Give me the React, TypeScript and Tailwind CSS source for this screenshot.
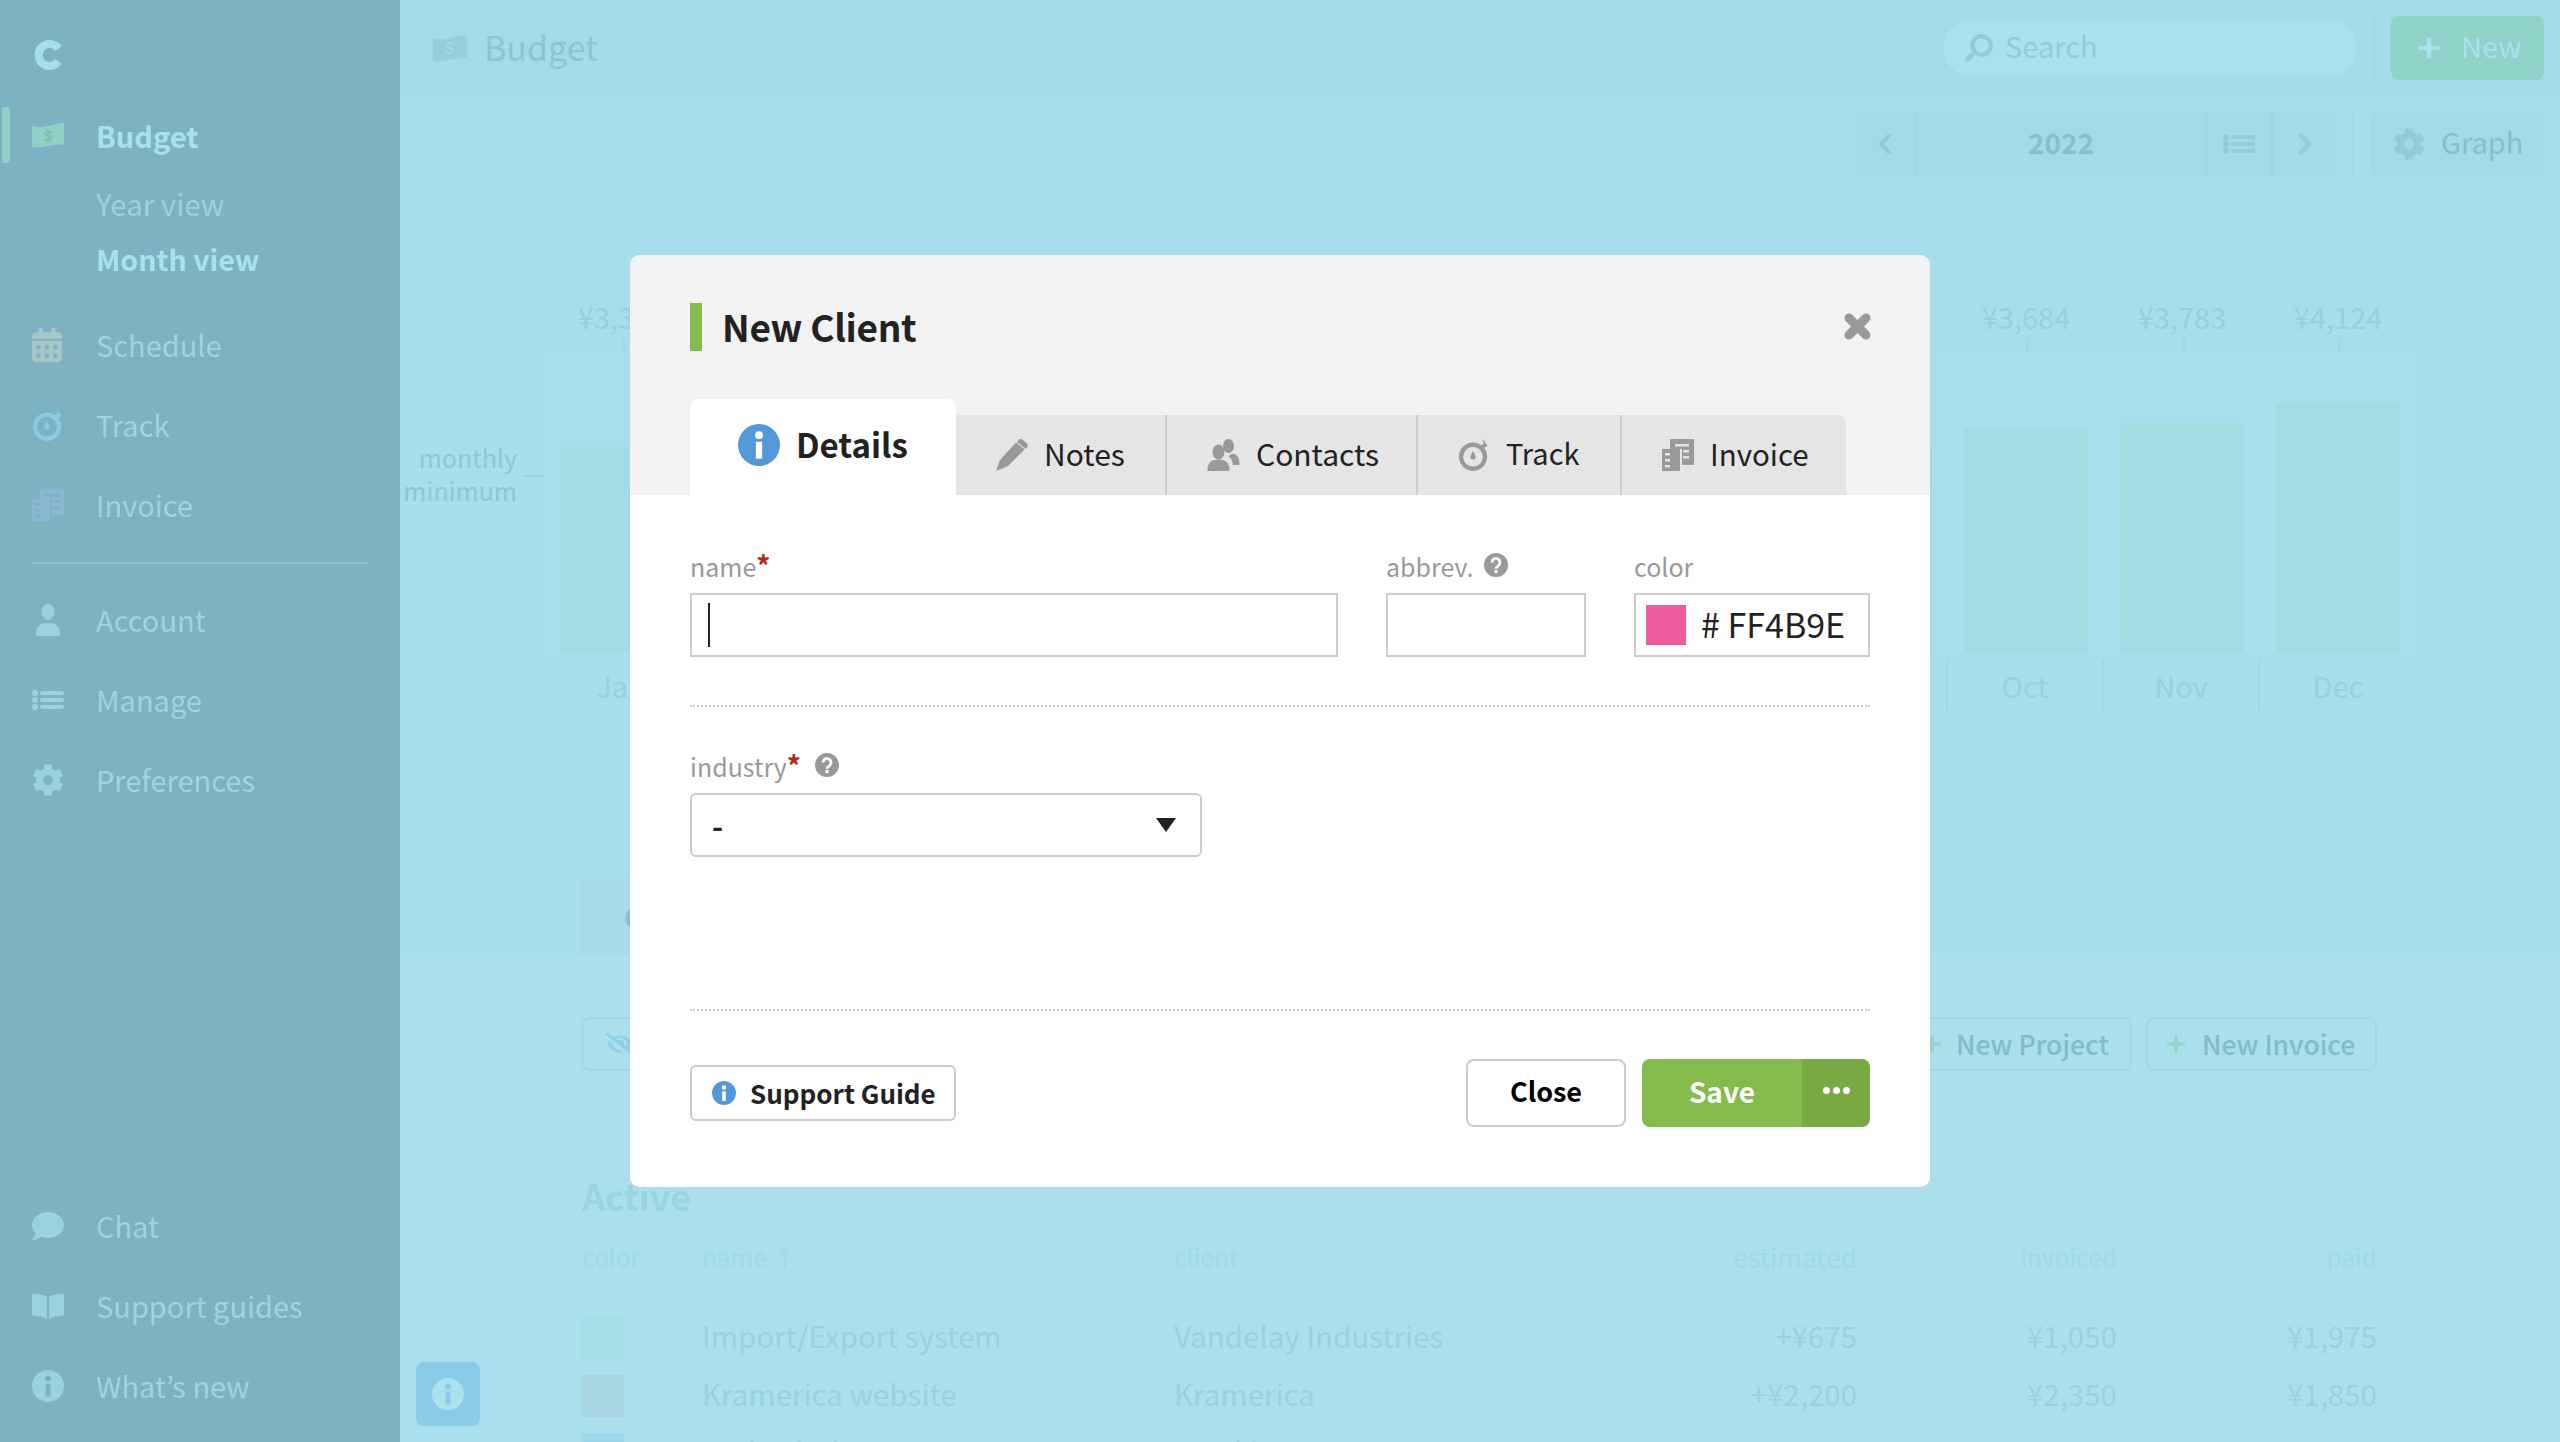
import React from "react";
import { FaCog, FaComment, FaBookOpen, FaPlus, FaSearch, FaCalendarAlt, FaEyeSlash } from "react-icons/fa";
import { ChevronLeft, ChevronRight } from "lucide-react";

function Info({ className }: { className?: string }) {
  return (
    <svg viewBox="0 0 32 32" className={className} fill="currentColor">
      <path fillRule="evenodd" d="M16 0a16 16 0 1 0 0 32a16 16 0 1 0 0-32z M16 5.500a3 3 0 1 1 0 6a3 3 0 1 1 0-6z M13.600 13.500h4.800v13h-4.800z" />
    </svg>
  );
}
function Help({ className }: { className?: string }) {
  return (
    <svg viewBox="0 0 24 24" className={className}>
      <circle cx="12" cy="12" r="12" fill="currentColor" />
      <path d="M8 9.500a4 4 0 1 1 6.200 3.300c-1.400.9-2.200 1.500-2.200 2.900" fill="none" stroke="#fff" strokeWidth="2.800" />
      <rect x="10.500" y="17" width="3" height="3.200" fill="#fff" />
    </svg>
  );
}
function Bill({ className, sign }: { className?: string; sign: string }) {
  return (
    <svg viewBox="0 0 32 26" className={className}>
      <path d="M0 4c5 1.500 10 1.500 16 0s11-3 16-3v22c-5-1-10-.5-16 1s-11 2-16 1z" fill="currentColor" />
      <text x="16" y="19" textAnchor="middle" fontSize="15" fontFamily="Liberation Sans, sans-serif" fill={sign}>$</text>
    </svg>
  );
}
function Stopwatch({ className }: { className?: string }) {
  return (
    <svg viewBox="0 0 32 32" className={className} fill="currentColor">
      <path fillRule="evenodd" d="M15 3.500a14.200 14.200 0 1 0 .01 0z M15 8a9.800 9.800 0 1 1-.01 0z" />
      <path d="M25 0l4.500 7-4.500 2.500-2-3 2.500-2z" />
      <path d="M15 12c1.500 3 2.600 4.400 2.600 6a2.600 2.600 0 0 1-5.200 0c0-1.600 1.100-3 2.600-6z" />
    </svg>
  );
}
function Doc({ className }: { className?: string }) {
  return (
    <svg viewBox="0 0 32 32" className={className} fill="currentColor">
      <path fillRule="evenodd" d="M8 0h24v26h-12v-16h-12z M13 5v2.500h14v-2.500z M21 11v2.500h6v-2.500z M21 17v2.500h6v-2.500z" />
      <path fillRule="evenodd" d="M0 10h18v22h-18z M3 14v2.500h5v-2.500z M3 20v2.500h5v-2.500z M3 26v2.500h5v-2.500z" />
    </svg>
  );
}
function ListIcon({ className }: { className?: string }) {
  return (
    <svg viewBox="0 0 32 20" className={className} fill="currentColor">
      <circle cx="3" cy="3" r="3" /><circle cx="3" cy="10" r="3" /><circle cx="3" cy="17" r="3" />
      <rect x="8" y="1" width="24" height="4" rx="2" /><rect x="8" y="8" width="24" height="4" rx="2" /><rect x="8" y="15" width="24" height="4" rx="2" />
    </svg>
  );
}
function Logo({ className }: { className?: string }) {
  return (
    <svg viewBox="0 0 28 30" className={className}>
      <path d="M24.500 8.500A11 11 0 1 0 24.500 21.500" fill="none" stroke="currentColor" strokeWidth="8" />
    </svg>
  );
}
function UserIcon({ className }: { className?: string }) {
  return (
    <svg viewBox="0 0 24 32" className={className} fill="currentColor">
      <ellipse cx="12" cy="8" rx="6.500" ry="8" />
      <path d="M0 32c0-7 .5-13 12-13s12 6 12 13z" />
    </svg>
  );
}
function Pencil({ className }: { className?: string }) {
  return (
    <svg viewBox="0 0 32 32" className={className} fill="currentColor">
      <path d="M0 32l4-11L20 3.500l8.500 7L12 27z" />
      <path d="M22 1.500a3.500 3.500 0 0 1 4.800-.6l3.600 3a3.500 3.500 0 0 1 .4 4.800l-1.200 1.300-8.600-7z" />
    </svg>
  );
}
function Users({ className }: { className?: string }) {
  return (
    <svg viewBox="0 0 32 32" className={className} fill="currentColor">
      <ellipse cx="21" cy="7" rx="5.500" ry="7" />
      <path d="M27 15c3.500 1.500 5 5 5 11h-6.500c-.5-4-2-7-4.500-9 1-.5 2-1 3-2z" />
      <ellipse cx="11" cy="13" rx="6" ry="7.500" />
      <path d="M0 32c0-7 2-11.500 11-11.500s11 4.500 11 11.500z" />
    </svg>
  );
}
function CloseX({ className }: { className?: string }) {
  return (
    <svg viewBox="0 0 27 27" className={className}>
      <path d="M5 5L22 22M22 5L5 22" stroke="currentColor" strokeWidth="9" strokeLinecap="round" />
    </svg>
  );
}

function NavItem({ icon, label }: { icon: React.ReactNode; label: string }) {
  return (
    <div className="flex items-center h-[80px] pl-[32px]">
      <div className="w-[64px] flex items-center">{icon}</div>
      <span className="text-[29px] text-[#9fd3e0]">{label}</span>
    </div>
  );
}

const months = [
  ["Jan", "¥3,312", 205], ["", "", 205], ["", "", 205], ["", "", 205], ["", "", 205], ["", "", 205],
  ["", "", 205], ["", "", 205], ["", "", 205], ["Oct", "¥3,684", 223], ["Nov", "¥3,783", 229], ["Dec", "¥4,124", 249],
] as const;

const rows = [
  ["bg-[#a6dee8]", "Import/Export system", "Vandelay Industries", "+¥675", "¥1,050", "¥1,975"],
  ["bg-[#a9d5e3]", "Kramerica website", "Kramerica", "+¥2,200", "¥2,350", "¥1,850"],
  ["bg-[#9cd8ec]", "Soda Finder", "Monk's", "+¥1,200", "¥1,400", "¥1,300"],
];

const gridCols = "grid grid-cols-[120px_472px_1fr_200px_260px_260px] items-center";

function Tab({ icon, label, w, size, border = true }: { icon: React.ReactNode; label: string; w: string; size: string; border?: boolean }) {
  return (
    <div className={`h-full flex items-center gap-[16px] pl-[40px] ${w} ${border ? "border-r-2 border-[#cccccc]" : ""}`}>
      {icon}
      <span className={`${size} pb-[4px] text-[#222222]`}>{label}</span>
    </div>
  );
}

export default function App() {
  return (
    <div className="relative h-[1442px] w-full overflow-hidden flex bg-[#a9e0ed] font-['Noto_Sans_CJK_JP','Noto_Sans',sans-serif]">
      {/* Sidebar */}
      <aside className="w-[400px] shrink-0 h-full bg-[#7eb1c1] flex flex-col">
        <div className="h-[107px] pl-[34px] pt-[40px]">
          <Logo className="w-[28px] h-[30px] text-[#a6dfeb]" />
        </div>
        <div className="relative flex items-center h-[56px] pl-[32px]">
          <div className="absolute left-[2px] top-0 w-[8px] h-full rounded-r-[4px] bg-[#8fd0c6]" />
          <div className="w-[64px]"><Bill className="w-[32px] h-[26px] text-[#8fd0c6]" sign="#7ab5b5" /></div>
          <span className="pt-[2px] text-[29px] font-bold text-[#a9e1ee]">Budget</span>
        </div>
        <div className="pl-[96px] pt-[12px] flex flex-col">
          <span className="h-[56px] flex items-center text-[29.500px] text-[#9bd0de]">Year view</span>
          <span className="h-[54px] flex items-center pt-[2px] text-[28.500px] font-bold text-[#a9e1ee]">Month view</span>
        </div>
        <div className="mt-[20px]">
          <NavItem icon={<FaCalendarAlt className="w-[30px] h-[34px] text-[#a4c7c6]" />} label="Schedule" />
          <NavItem icon={<Stopwatch className="w-[32px] h-[32px] text-[#88cbe6]" />} label="Track" />
          <NavItem icon={<Doc className="w-[32px] h-[32px] text-[#8bb6d4]" />} label="Invoice" />
        </div>
        <div className="mx-[32px] mt-[17px] mb-[16px] h-[2px] bg-[#92c5d3]" />
        <NavItem icon={<UserIcon className="w-[24px] h-[32px] ml-[4px] text-[#9bd0de]" />} label="Account" />
        <NavItem icon={<ListIcon className="w-[32px] h-[26px] text-[#9bd0de]" />} label="Manage" />
        <NavItem icon={<FaCog className="w-[32px] h-[32px] text-[#9bd0de]" />} label="Preferences" />
        <div className="mt-auto pb-[16px]">
          <NavItem icon={<FaComment className="w-[32px] h-[32px] text-[#9bd0de]" />} label="Chat" />
          <NavItem icon={<FaBookOpen className="w-[32px] h-[32px] text-[#9bd0de]" />} label="Support guides" />
          <NavItem icon={<Info className="w-[32px] h-[32px] text-[#9bd0de]" />} label="What’s new" />
        </div>
      </aside>

      {/* Main */}
      <main className="relative flex-1 min-w-0 h-full flex flex-col">
        <header className="h-[96px] shrink-0 bg-[#a5dbe8] flex items-center pl-[32px] pr-[16px]">
          <Bill className="w-[36px] h-[28px] text-[#96cedc]" sign="#a5dbe8" />
          <span className="ml-[16px] pb-[4px] text-[34px] text-[#8ec5d4]">Budget</span>
          <div className="ml-auto w-[414px] h-[56px] rounded-[28px] bg-[#a9e1ee] flex items-center pl-[22px]">
            <FaSearch className="w-[28px] h-[28px] -scale-x-100 text-[#94cbd9]" />
            <span className="ml-[12px] pb-[4px] text-[29px] text-[#94cbd9]">Search</span>
          </div>
          <div className="mx-[16px] w-[2px] h-[64px] bg-[#a1d6e3]" />
          <div className="w-[153px] h-[64px] rounded-[8px] bg-[#8fd3c9] flex items-center pl-[26px]">
            <FaPlus className="w-[24px] h-[24px] text-[#a9e1ee]" />
            <span className="ml-[20px] pb-[4px] text-[29px] text-[#a9e1ee]">New</span>
          </div>
        </header>

        <div className="h-[859px] shrink-0 bg-[#a6deeb] flex flex-col">
          <div className="h-[64px] mt-[16px] flex justify-end pr-[16px]">
            <div className="w-[481px] h-full rounded-[8px] bg-[#a4d9e7] flex items-stretch">
              <div className="w-[62px] flex items-center justify-center border-r-2 border-[#a0d4e2]">
                <ChevronLeft className="w-[34px] h-[34px] text-[#94cbd9]" strokeWidth={3} />
              </div>
              <div className="w-[290px] flex items-center justify-center pb-[4px] text-[28px] font-bold text-[#88bfce] border-r-2 border-[#a0d4e2]">2022</div>
              <div className="w-[66px] flex items-center justify-center border-r-2 border-[#a0d4e2]">
                <ListIcon className="w-[32px] h-[32px] text-[#94cbd9]" />
              </div>
              <div className="w-[63px] flex items-center justify-center">
                <ChevronRight className="w-[34px] h-[34px] text-[#94cbd9]" strokeWidth={3} />
              </div>
            </div>
            <div className="w-[34px] flex justify-center"><div className="h-full border-l-2 border-dotted border-[#a0d4e2]" /></div>
            <div className="w-[174px] h-full rounded-[8px] bg-[#a4d9e7] flex items-center pl-[23px]">
              <FaCog className="w-[32px] h-[32px] text-[#94cbd9]" />
              <span className="ml-[16px] pb-[4px] text-[29px] text-[#88bfce]">Graph</span>
            </div>
          </div>

          {/* Chart */}
          <div className="mt-[176px] flex h-[358px]">
            <div className="w-[144px] relative">
              <div className="absolute top-[89px] right-[27px] text-right text-[25px] leading-[33px] text-[#90c7d5]">monthly<br />minimum</div>
              <div className="absolute top-[123px] right-0 w-[20px] h-[2px] bg-[#9dd3e1]" />
            </div>
            <div className="w-[1872px] flex flex-col">
              <div className="grid grid-cols-12 h-[300px] bg-[#a8dfec]">
                {months.map(([m, v, h], i) => (
                  <div key={i} className="relative px-[16px] flex items-end">
                    <div className="w-full bg-[#a1dde0]" style={{ height: h }} />
                    {v ? <span className="absolute inset-x-0 top-[-54px] text-center text-[29px] leading-[36px] text-[#97cfdd]">{v}</span> : null}
                    {m ? <div className="absolute left-1/2 top-[-14px] h-[14px] w-[3px] bg-[#a0d7e4]" /> : null}
                  </div>
                ))}
              </div>
              <div className="grid grid-cols-12 h-[50px] mt-[8px]">
                {months.map(([m], i) => (
                  <div key={i} className={`flex items-center justify-center pt-[2px] text-[29px] text-[#98d0de] ${i < 11 ? "border-r-2 border-[#a1d6e3]" : ""}`}>{m}</div>
                ))}
              </div>
            </div>
          </div>

          <div className="mt-[167px] ml-[180px] w-[400px] h-[78px] bg-[#a7dbe8] flex items-center pl-[44px] text-[30px] font-bold text-[#88bfce]">Overview</div>
        </div>

        {/* Project list */}
        <div className="flex-1 bg-[#abdfec] pl-[182px] pr-[183px] pt-[62px]">
          <div className="flex justify-between h-[54px]">
            <div className="h-full w-[100px] border-2 border-[#a2d8e5] rounded-[8px] flex items-center pl-[22px]">
              <FaEyeSlash className="w-[28px] h-[28px] text-[#8fd0e6]" />
            </div>
            <div className="flex gap-[14px]">
              <div className="h-full w-[236px] border-2 border-[#a2d8e5] rounded-[8px] flex items-center pl-[24px]">
                <FaPlus className="w-[20px] h-[20px] text-[#93d5cb]" />
                <span className="ml-[14px] text-[26.500px] font-medium text-[#84bcca]">New Project</span>
              </div>
              <div className="h-full w-[231px] border-2 border-[#a2d8e5] rounded-[8px] flex items-center pl-[18px]">
                <FaPlus className="w-[20px] h-[20px] text-[#93d5cb]" />
                <span className="ml-[16px] text-[26.500px] font-medium text-[#84bcca]">New Invoice</span>
              </div>
            </div>
          </div>
          <h2 className="mt-[100px] text-[36px] leading-[48px] font-bold text-[#9bd3e1]">Active</h2>
          <div className={`${gridCols} mt-[18px] h-[40px] text-[24.500px] text-[#a0d8e6]`}>
            <span>color</span><span>name ↑</span><span>client</span>
            <span className="text-right text-[26.500px]">estimated</span><span className="text-right">invoiced</span><span className="text-right">paid</span>
          </div>
          <div className="mt-[29px] flex flex-col">
            {rows.map((r) => (
              <div key={r[1]} className={`${gridCols} h-[58px] text-[29.500px] text-[#9ad0df]`}>
                <div className={`mt-[6px] w-[42px] h-[42px] ${r[0]}`} />
                <span>{r[1]}</span><span>{r[2]}</span>
                <span className="text-right">{r[3]}</span><span className="text-right">{r[4]}</span><span className="text-right">{r[5]}</span>
              </div>
            ))}
          </div>
        </div>

        <div className="absolute left-[16px] top-[1362px] w-[64px] h-[64px] rounded-[8px] bg-[#8accE5] flex items-center justify-center">
          <Info className="w-[32px] h-[32px] text-[#abe0ed]" />
        </div>
      </main>

      {/* Modal */}
      <div className="absolute left-[630px] top-[255px] w-[1300px] h-[932px] rounded-[10px] overflow-hidden bg-white flex flex-col">
        <div className="h-[240px] shrink-0 bg-[#f2f2f2] px-[60px] flex flex-col">
          <div className="mt-[48px] h-[48px] flex items-center">
            <div className="w-[12px] h-[48px] bg-[#84bb4c]" />
            <h1 className="ml-[20px] text-[37px] tracking-[-0.3px] font-bold text-[#222222]">New Client</h1>
            <CloseX className="ml-auto mt-[-2px] mr-[-1px] w-[27px] h-[27px] text-[#999999]" />
          </div>
          <div className="mt-auto flex items-end h-[96px]">
            <div className="w-[266px] h-[96px] rounded-t-[8px] bg-white flex items-center pl-[48px] pb-[4px] gap-[16px]">
              <Info className="w-[42px] h-[42px] text-[#5398d8]" />
              <span className="text-[33px] font-bold text-[#222222]">Details</span>
            </div>
            <div className="h-[80px] flex bg-[#e5e5e5] rounded-tr-[8px]">
              <Tab w="w-[211px]" size="text-[30px]" icon={<Pencil className="w-[32px] h-[32px] text-[#999999]" />} label="Notes" />
              <Tab w="w-[251px]" size="text-[30px]" icon={<Users className="w-[33px] h-[32px] text-[#999999]" />} label="Contacts" />
              <Tab w="w-[204px]" size="text-[29px]" icon={<Stopwatch className="w-[32px] h-[32px] text-[#999999]" />} label="Track" />
              <Tab w="w-[224px]" size="text-[29.500px]" border={false} icon={<Doc className="w-[32px] h-[32px] text-[#999999]" />} label="Invoice" />
            </div>
          </div>
        </div>
        <div className="flex-1 px-[60px] flex flex-col">
          <div className="mt-[54px] flex gap-[48px]">
            <div className="w-[648px]">
              <div className="h-[44px] text-[25px] leading-[34px] text-[#999999]">name<span className="text-[28px] font-bold leading-[28px] text-[#b3261e]">*</span></div>
              <div className="h-[64px] border-2 border-[#cccccc] flex items-center pl-[16px]"><div className="w-[2px] h-[44px] bg-[#222222]" /></div>
            </div>
            <div className="w-[200px]">
              <div className="h-[44px] flex items-start gap-[11px] text-[25px] leading-[34px] text-[#999999]">abbrev.<Help className="mt-[4px] w-[24px] h-[24px] text-[#999999]" /></div>
              <div className="h-[64px] border-2 border-[#cccccc]" />
            </div>
            <div className="w-[236px]">
              <div className="h-[44px] text-[25px] leading-[34px] text-[#999999]">color</div>
              <div className="h-[64px] border-2 border-[#cccccc] flex items-center pl-[10px]">
                <div className="w-[40px] h-[40px] bg-[#ed5c9c]" />
                <span className="ml-[15px] pb-[4px] text-[34px] text-[#222222]"># FF4B9E</span>
              </div>
            </div>
          </div>
          <div className="mt-[48px] border-t-2 border-dotted border-[#cccccc]" />
          <div className="mt-[42px] h-[44px] flex items-start gap-[14px] text-[25px] leading-[34px] text-[#999999]">
            <span>industry<span className="text-[28px] font-bold leading-[28px] text-[#b3261e]">*</span></span>
            <Help className="mt-[4px] w-[24px] h-[24px] text-[#999999]" />
          </div>
          <div className="w-[512px] h-[64px] border-2 border-[#cccccc] rounded-[6px] flex items-center pl-[20px] pr-[24px] justify-between">
            <span className="text-[30px] font-bold text-[#222222]">-</span>
            <svg viewBox="0 0 20 14" className="w-[20px] h-[14px]"><path d="M0 0h20l-10 14z" fill="#222222" /></svg>
          </div>
          <div className="mt-[152px] border-t-2 border-dotted border-[#cccccc]" />
          <div className="mt-[48px] flex items-center">
            <div className="w-[266px] h-[56px] border-2 border-[#cccccc] rounded-[6px] flex items-center pl-[20px] gap-[14px]">
              <Info className="w-[24px] h-[24px] text-[#5398d8]" />
              <span className="text-[26px] pb-[2px] whitespace-nowrap font-bold text-[#222222]">Support Guide</span>
            </div>
            <div className="ml-auto w-[160px] h-[68px] pb-[4px] border-2 border-[#cccccc] rounded-[8px] flex items-center justify-center text-[27px] font-bold text-black">Close</div>
            <div className="ml-[16px] w-[228px] h-[68px] rounded-[8px] overflow-hidden flex">
              <div className="w-[160px] pb-[4px] bg-[#84bb4c] flex items-center justify-center text-[28px] font-bold text-white">Save</div>
              <div className="flex-1 bg-[#79a942] flex items-center justify-center gap-[3px] pb-[6px]">
                <span className="w-[7px] h-[7px] rounded-full bg-white" />
                <span className="w-[7px] h-[7px] rounded-full bg-white" />
                <span className="w-[7px] h-[7px] rounded-full bg-white" />
              </div>
            </div>
          </div>
        </div>
      </div>
    </div>
  );
}
